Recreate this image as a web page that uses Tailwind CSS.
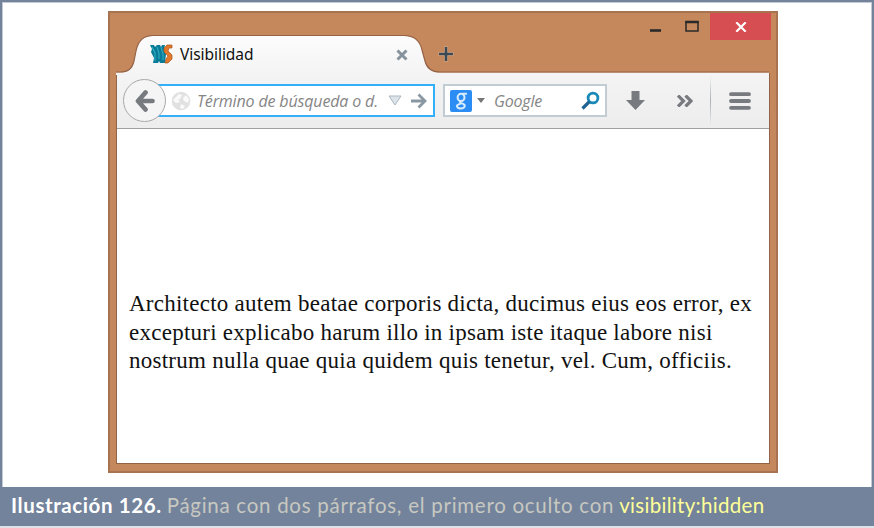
<!DOCTYPE html>
<html lang="es">
<head>
<meta charset="utf-8">
<title>Visibilidad</title>
<script src="https://cdn.jsdelivr.net/npm/@tailwindcss/browser@4"></script>
</head>
<body class="w-[874px] h-[528px] overflow-hidden bg-[#dfe3e9]">
<figure class="w-[874px] h-[526px] flex flex-col bg-[#73839b]">
  <div class="mt-[2px] ml-[2px] w-[870px] h-[485px] bg-white border-t border-x border-[#c3cad5] pl-[105px] pt-[8px]">
    <section class="w-[670px] h-[462px] bg-[#c5875c] border-2 border-[#a87351] flex flex-col px-[7px] pb-[7px]">
      <header class="relative h-[60px] shrink-0 flex items-start">
        <svg class="absolute left-[-1px] top-[21px]" width="653" height="41" viewBox="0 0 653 41">
          <defs><linearGradient id="tab" x1="0" y1="0" x2="0" y2="1"><stop offset="0" stop-color="#fcfcfc"/><stop offset="1" stop-color="#f4f4f4"/></linearGradient></defs>
          <path d="M0 41V38.500H4C12 38.500 16 35 18 27L20 17C22 7 27 2 37 2H288C299 2 304 7 306 16L309 27C311 35 316 38.500 324 38.500H653V41Z" fill="url(#tab)"/>
          <path d="M0 38H4C12 38 16 35 18 27L20 17C22 7 27 1.500 37 1.500H288C299 1.500 304 7 306 16L309 27C311 35 316 38 324 38H653" fill="none" stroke="#966346" stroke-width="1.200"/>
        </svg>
        <div class="relative flex items-center w-[308px] h-[25px] mt-[29px] pl-[33px]">
          <svg class="shrink-0" width="23" height="21" viewBox="0 0 23 21">
            <path d="M0 1H4L5 3L7 1H10L11 3L12 1H15L14 5L16 10L15 19H10L9 17L8 19H3L4 14L1 8L2 5Z" fill="#087b98"/>
            <path d="M2 3L5 9V17M7 3L9 9V15M11 3L13 10V16" fill="none" stroke="#31aec0" stroke-width="1.100"/>
            <path d="M22 1H17L14 4V8L18 12L16 15L15 19H18L22 15V11L18 7L19 4H22Z" fill="#e0792b" stroke="#a9551e" stroke-width=".7"/>
          </svg>
          <span class="ml-[7px] font-['Noto_Sans',sans-serif] text-[15.500px] tracking-[-0.050px] text-[#111] whitespace-nowrap">Visibilidad</span>
          <svg class="ml-auto mr-[17px]" width="12" height="12" viewBox="0 0 12 12"><path d="M1.500 1.500L10.500 10.500M10.500 1.500L1.500 10.500" stroke="#87939c" stroke-width="3"/></svg>
        </div>
        <svg class="relative ml-[13px] mt-[33px]" width="16" height="16" viewBox="0 0 16 16"><path d="M8 .5V15.500M.5 8H15.500" stroke="#dba985" stroke-width="4"/><path d="M8 1V15M1 8H15" stroke="#394a55" stroke-width="2.600"/></svg>
        <svg class="ml-auto mr-[10px] mt-[6px]" width="50" height="18" viewBox="0 0 50 18"><path d="M0 11.500H11" stroke="#292929" stroke-width="2.600"/><rect x="36" y="3" width="12" height="9" fill="none" stroke="#292929" stroke-width="1.500"/><path d="M35.250 3H48.750" stroke="#292929" stroke-width="2.500"/></svg>
        <div class="w-[61px] h-[27px] mr-[-2px] bg-[#d74e52] flex items-center justify-center"><svg width="12" height="10" viewBox="0 0 12 10"><path d="M1.300 .3L10.700 9.700M10.700 .3L1.300 9.700" stroke="white" stroke-width="2.200"/></svg></div>
      </header>
      <div class="-mx-px flex-1 flex flex-col border-x border-b border-[#936348] bg-white">
        <nav class="relative h-[56px] shrink-0 bg-linear-to-b from-[#f4f4f4] to-[#ededed] border-b border-[#9f9f9f] flex items-center pl-[6px]">
          <div class="relative z-10 w-[43px] h-[43px] shrink-0 rounded-full border border-[#a8a8a8] bg-[#f5f5f5] flex items-center justify-center">
            <svg width="20" height="22" viewBox="0 0 20 22"><path d="M10.500 2.500L3 11L10.500 19.500M4 11H17.500" fill="none" stroke="#777b80" stroke-width="4.700" stroke-linecap="round" stroke-linejoin="round"/></svg>
          </div>
          <div class="ml-[-9px] w-[278px] h-[33px] shrink-0 bg-white border-2 border-l-0 border-[#33b0f8] flex items-center">
            <svg class="ml-[14px] shrink-0" width="20" height="20" viewBox="0 0 20 20"><circle cx="10" cy="10" r="9.300" fill="#e1e1e1"/><path d="M4 7L8 3L11 4L9 8L7 8L9 11L5 12L2 9ZM12 7L15 4L18 8L17 12L13 10ZM10 13L14 15L12 18L9 17Z" fill="#fafafa"/></svg>
            <span class="ml-[6px] w-[185px] shrink-0 whitespace-nowrap font-['Open_Sans',sans-serif] italic text-[16px] tracking-[-0.150px] text-[#858585]">Término de búsqueda o d.</span>
            <svg class="ml-[6px] shrink-0" width="14" height="11" viewBox="0 0 14 11"><path d="M1 1H13L7 10Z" fill="#dde4ea" stroke="#aab7c1"/></svg>
            <svg class="ml-[9px] shrink-0" width="16" height="16" viewBox="0 0 16 16"><path d="M0 8H13M7.500 1.500L14 8L7.500 14.500" fill="none" stroke="#8998a3" stroke-width="2.800"/></svg>
          </div>
          <div class="ml-[8px] w-[164px] h-[33px] bg-white border-2 border-[#c2cdd3] flex items-center">
            <div class="ml-[5px] w-[22px] h-[22px] rounded-[2px] bg-[#2b8cf3] flex items-center justify-center">
              <svg width="13" height="18" viewBox="0 0 14 20" fill="none" stroke="#d8ecff" stroke-width="2.300"><ellipse cx="6.500" cy="6" rx="3.800" ry="4"/><path d="M8 2H13M8 9.500Q3 11 7 12.500Q12 14 10 17Q7 19.500 3 17.500Q0 14.500 6 13"/></svg>
            </div>
            <svg class="ml-[5px]" width="8" height="5" viewBox="0 0 8 5"><path d="M0 0H8L4 5Z" fill="#777"/></svg>
            <span class="ml-[9px] font-['Open_Sans',sans-serif] italic text-[16px] tracking-[-0.200px] text-[#858585]">Google</span>
            <svg class="ml-auto mr-[5px]" width="19" height="19" viewBox="0 0 19 19"><circle cx="12" cy="7" r="4.900" fill="none" stroke="#198ab7" stroke-width="2.800"/><path d="M8.500 10.500L1.500 17.500" stroke="#216494" stroke-width="3.200"/></svg>
          </div>
          <svg class="ml-[19px]" width="19" height="19" viewBox="0 0 19 19"><path d="M5.500 0H13.500V9H19L9.500 19L0 9H5.500Z" fill="#777b80"/></svg>
          <svg class="ml-[32px]" width="16" height="12" viewBox="0 0 16 12"><path d="M1 .5L6.500 6L1 11.500M8.500 .5L14 6L8.500 11.500" fill="none" stroke="#777b80" stroke-width="3.200"/></svg>
          <div class="ml-[17px] w-px h-[50px] bg-linear-to-b from-transparent via-[#a6b2ba] to-transparent"></div>
          <svg class="ml-[18px]" width="22" height="18" viewBox="0 0 22 18"><path d="M2 2.200H20M2 9H20M2 15.800H20" stroke="#777b80" stroke-width="3.800" stroke-linecap="round"/></svg>
        </nav>
        <main class="pt-[161px] pl-[12px] font-['Liberation_Serif',serif] text-[23px] tracking-[0.250px] leading-[28.500px] text-[#111] whitespace-nowrap [font-variant-ligatures:none]">
          <p><span class="block w-fit">Architecto autem beatae corporis dicta, ducimus eius eos error, ex</span><span class="block w-fit">excepturi explicabo harum illo in ipsam iste itaque labore nisi</span><span class="block w-fit">nostrum nulla quae quia quidem quis tenetur, vel. Cum, officiis.</span></p>
        </main>
      </div>
    </section>
  </div>
  <figcaption class="h-[39px] shrink-0 pl-[11px] flex items-center pb-[3px] font-['Lato',sans-serif] text-[20.500px] whitespace-nowrap text-[#c7c8c1]">
    <b class="text-white tracking-[0.600px]">Ilustración 126.</b><span class="ml-[5px] tracking-[0.720px]">Página con dos párrafos, el primero oculto con</span><span class="ml-[5px] tracking-[0.300px] text-[#ffff99]">visibility:hidden</span>
  </figcaption>
</figure>
</body>
</html>
